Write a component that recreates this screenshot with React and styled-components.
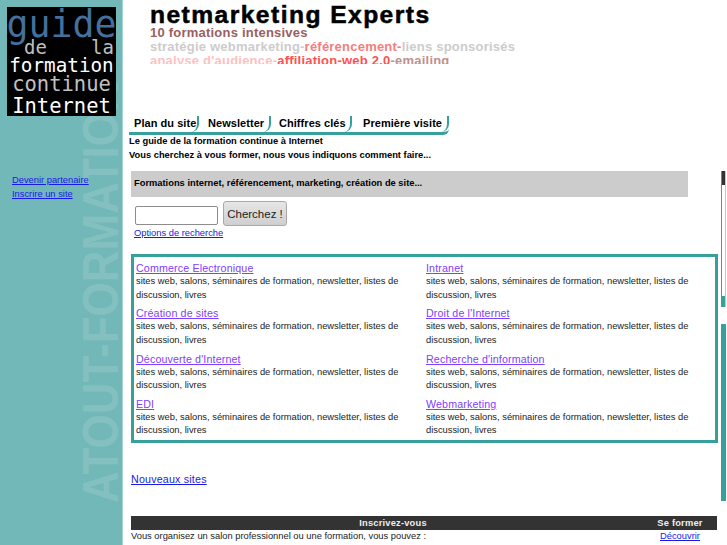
import React from 'react';
import styled, { createGlobalStyle } from 'styled-components';

const GlobalStyle = createGlobalStyle`
  html, body {
    margin: 0;
    padding: 0;
    background: #fff;
    height: 545px;
    overflow: hidden;
    font-family: "Liberation Sans", Arial, sans-serif;
  }
`;

const teal = '#38a09c';

const Page = styled.div`
  display: flex;
  width: 727px;
  height: 545px;
  overflow: hidden;
`;

const Sidebar = styled.aside`
  position: relative;
  flex: 0 0 123px;
  box-sizing: border-box;
  padding: 7px 0 0 7px;
  background: #72b8b8;
  border-right: 1px solid #a8d4d4;
  overflow: hidden;
`;

const Watermark = styled.div`
  position: absolute;
  left: 80px;
  top: 503px;
  transform-origin: 0 0;
  transform: rotate(-90deg) scaleX(0.88);
  font: bold 50px/42px "Liberation Sans", Arial, sans-serif;
  white-space: nowrap;
  color: #84c0c0;
`;

const Logo = styled.div`
  position: relative;
  box-sizing: border-box;
  width: 109px;
  height: 109px;
  padding-top: 8px;
  background: #000;
  font-family: "DejaVu Sans Mono", monospace;
`;

const LogoLine = styled.div`
  display: flex;
  justify-content: ${(p) => p.$justify || 'center'};
  height: ${(p) => p.$height}px;
  line-height: ${(p) => p.$height}px;
  padding: ${(p) => (p.$justify ? '0 2px 0 17px' : '0')};
  font-size: ${(p) => p.$size}px;
  color: ${(p) => p.$color};
  white-space: nowrap;
`;

const SideLinks = styled.nav`
  position: relative;
  display: flex;
  flex-direction: column;
  gap: 1px;
  margin: 58px 0 0 5px;
`;

const SideLink = styled.a`
  font: 9.33px/13px "Liberation Sans", Arial, sans-serif;
  color: #1a1ae6;
  text-decoration: underline;
`;

const Main = styled.main`
  flex: 0 0 598px;
  display: flex;
  flex-direction: column;
`;

const Banner = styled.header`
  box-sizing: border-box;
  width: 392px;
  height: 64px;
  padding: 4px 0 0 27px;
  overflow: hidden;
  font-family: "Liberation Sans", Arial, sans-serif;
  font-weight: bold;
  white-space: nowrap;
`;

const BannerTitle = styled.div`
  font-size: 23px;
  line-height: 22px;
  letter-spacing: 1.35px;
  -webkit-text-stroke: 0.5px #000;
  color: #000;
  transform-origin: 0 50%;
  transform: scaleX(1.07);
`;

const BannerLine = styled.div`
  font-size: 13px;
  line-height: 14px;
  letter-spacing: 0.22px;
  color: #ccc;
`;

const Tone = styled.span`
  color: ${(p) => p.$color};
`;

const Tabs = styled.nav`
  display: flex;
  width: 320px;
  height: 16px;
  margin: 52px 0 0 6px;
  border-bottom: 3px solid ${teal};
  border-radius: 0 0 6px 0;
`;

const Tab = styled.a`
  box-sizing: border-box;
  width: ${(p) => p.$width}px;
  height: 16px;
  padding-left: ${(p) => p.$pad}px;
  font: bold 11px/15px "Liberation Sans", Arial, sans-serif;
  letter-spacing: 0.05px;
  color: #000;
  white-space: nowrap;
  border-right: 2px solid ${teal};
  border-radius: 0 0 8px 0;
`;

const Intro = styled.p`
  margin: 0 0 0 6px;
  font: bold 9.33px/13.5px "Liberation Sans", Arial, sans-serif;
  color: #000;
  white-space: nowrap;
`;

const Content = styled.div`
  display: flex;
  flex-direction: column;
  margin: 9px 0 0 8px;
`;

const SearchBanner = styled.div`
  box-sizing: border-box;
  width: 557px;
  height: 26px;
  padding-left: 3px;
  background: #ccc;
  font: bold 9.33px/24px "Liberation Sans", Arial, sans-serif;
  color: #000;
`;

const SearchRow = styled.form`
  display: flex;
  align-items: center;
  gap: 5px;
  margin: 4px 0 0 4px;
`;

const SearchInput = styled.input`
  box-sizing: border-box;
  width: 83px;
  height: 19px;
  margin-top: 4px;
  background: #fff;
  border: 1px solid #8d8d8d;
  border-radius: 2px;
`;

const SearchButton = styled.button`
  box-sizing: border-box;
  width: 64px;
  height: 25px;
  padding: 0;
  background: linear-gradient(#e6e6e6, #cfcfcf);
  border: 1px solid #a9a9a9;
  border-radius: 3px;
  font: 11.5px "Liberation Sans", Arial, sans-serif;
  color: #222;
`;

const OptionsLink = styled.a`
  margin: 1px 0 0 3px;
  font: 9.33px/13px "Liberation Sans", Arial, sans-serif;
  color: #1a1ae6;
  text-decoration: underline;
`;

const Catalog = styled.section`
  box-sizing: border-box;
  display: grid;
  grid-template-columns: 290px 1fr;
  width: 587px;
  height: 189px;
  margin-top: 14px;
  padding: 4px 0 0 2px;
  border: 3px solid ${teal};
`;

const Entry = styled.div`
  height: 45.3px;
  padding-right: 20px;
`;

const EntryTitle = styled.a`
  display: block;
  font: 10.67px/14px "Liberation Sans", Arial, sans-serif;
  letter-spacing: 0.15px;
  color: #8040ff;
  text-decoration: underline;
`;

const EntryText = styled.div`
  font: 9.33px/13.5px "Liberation Sans", Arial, sans-serif;
  color: #222;
`;

const NewSites = styled.a`
  margin-top: 29px;
  font: 10.67px/14px "Liberation Sans", Arial, sans-serif;
  letter-spacing: 0.2px;
  color: #1a1ae6;
  text-decoration: underline;
`;

const BarRow = styled.div`
  display: grid;
  grid-template-columns: 524px 50px;
  width: 586px;
  height: 14px;
  margin-top: 30px;
  background: #333;
  font: bold 9.33px/14px "Liberation Sans", Arial, sans-serif;
  letter-spacing: 0.2px;
  color: #eee;
`;

const BarCell = styled.div`
  text-align: center;
`;

const InfoRow = styled.div`
  display: grid;
  grid-template-columns: 524px 50px;
  width: 586px;
  font: 9.33px/13px "Liberation Sans", Arial, sans-serif;
  color: #222;
`;

const InfoLink = styled.a`
  text-align: center;
  color: #1a1ae6;
  text-decoration: underline;
`;

const Rail = styled.div`
  flex: 0 0 5px;
  display: flex;
  flex-direction: column;
  padding-top: 171px;
`;

const RailTrack = styled.div`
  box-sizing: border-box;
  width: 5px;
  height: 136px;
  border-left: 1px solid ${teal};
  border-right: 1px solid #a8d4d4;
  background: linear-gradient(#333 0, #333 14px, #fff 14px, #fff 125px, ${teal} 125px);
`;

const RailBar = styled.div`
  width: 5px;
  height: 177px;
  margin-top: 17px;
  background: ${teal};
`;

const entries = [
  ['Commerce Electronique', 'Intranet'],
  ['Création de sites', "Droit de l'Internet"],
  ["Découverte d'Internet", "Recherche d'information"],
  ['EDI', 'Webmarketing'],
];

const App = () => (
  <Page>
    <GlobalStyle />
    <Sidebar>
      <Watermark>ATOUT-FORMATION</Watermark>
      <Logo>
        <LogoLine $height={20} $size={36.5} $color="#46709c">guide</LogoLine>
        <LogoLine $height={24} $size={19} $color="#c0c0c0" $justify="space-between">
          <span>de</span>
          <span>la</span>
        </LogoLine>
        <LogoLine $height={14} $size={19.3} $color="#fff">formation</LogoLine>
        <LogoLine $height={23} $size={20.5} $color="#c0c0c0">continue</LogoLine>
        <LogoLine $height={20} $size={20.5} $color="#fff">Internet</LogoLine>
      </Logo>
      <SideLinks>
        <SideLink>Devenir partenaire</SideLink>
        <SideLink>Inscrire un site</SideLink>
      </SideLinks>
    </Sidebar>
    <Main>
      <Banner>
        <BannerTitle>netmarketing Experts</BannerTitle>
        <BannerLine><Tone $color="#9a6060">10 formations intensives</Tone></BannerLine>
        <BannerLine>
          stratégie webmarketing-<Tone $color="#f08080">référencement-</Tone>liens sponsorisés
        </BannerLine>
        <BannerLine>
          <Tone $color="#ffc0c0">analyse d'audience-</Tone>
          <Tone $color="#ff5050">affiliation-web 2.0</Tone>
          <Tone $color="#c09090">-emailing</Tone>
        </BannerLine>
      </Banner>
      <Tabs>
        <Tab $width={70} $pad={5}>Plan du site</Tab>
        <Tab $width={72} $pad={9}>Newsletter</Tab>
        <Tab $width={81} $pad={8}>Chiffres clés</Tab>
        <Tab $width={97} $pad={11}>Première visite</Tab>
      </Tabs>
      <Intro>Le guide de la formation continue à Internet</Intro>
      <Intro>Vous cherchez à vous former, nous vous indiquons comment faire...</Intro>
      <Content>
        <SearchBanner>Formations internet, référencement, marketing, création de site...</SearchBanner>
        <SearchRow>
          <SearchInput />
          <SearchButton type="button">Cherchez !</SearchButton>
        </SearchRow>
        <OptionsLink>Options de recherche</OptionsLink>
        <Catalog>
          {entries.flat().map((title) => (
            <Entry key={title}>
              <EntryTitle>{title}</EntryTitle>
              <EntryText>sites web, salons, séminaires de formation, newsletter, listes de discussion, livres</EntryText>
            </Entry>
          ))}
        </Catalog>
        <NewSites>Nouveaux sites</NewSites>
        <BarRow>
          <BarCell>Inscrivez-vous</BarCell>
          <BarCell>Se former</BarCell>
        </BarRow>
        <InfoRow>
          <div>Vous organisez un salon professionnel ou une formation, vous pouvez :</div>
          <InfoLink>Découvrir</InfoLink>
        </InfoRow>
      </Content>
    </Main>
    <Rail>
      <RailTrack />
      <RailBar />
    </Rail>
  </Page>
);

export default App;
